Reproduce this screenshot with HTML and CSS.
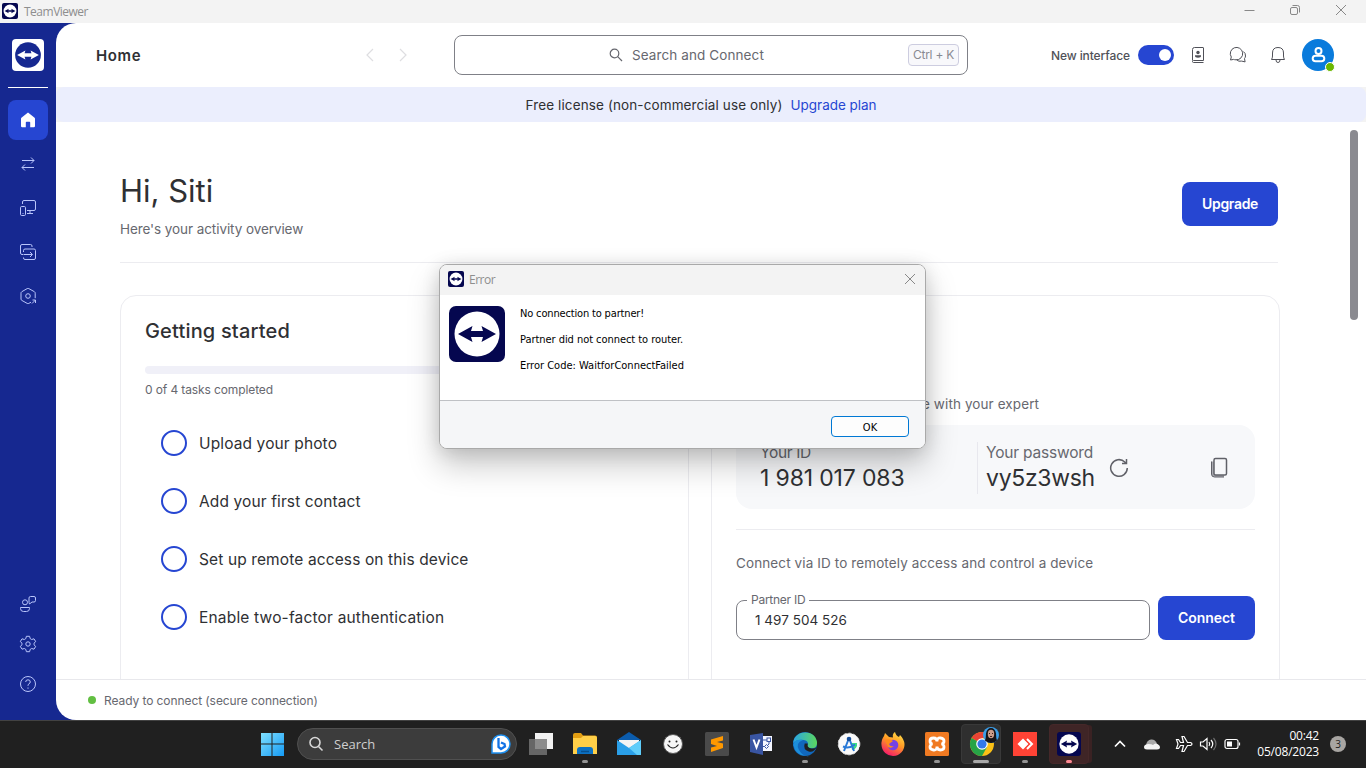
FILE: index.html
```html
<!DOCTYPE html>
<html lang="en">
<head>
<meta charset="utf-8">
<title>TeamViewer</title>
<link rel="stylesheet" href="styles.css">
</head>
<body>
<svg class="defs" width="0" height="0" aria-hidden="true">
  <symbol id="logo" viewBox="0 0 56 56">
    <rect class="logo-bg" width="56" height="56" rx="7"/>
    <circle class="logo-disc" cx="28" cy="28" r="22.500"/>
    <path class="logo-bg" d="M9 28l14.500-8-1.500 5h12l-1.500-5L47 28l-14.500 8 1.500-5H22l1.500 5z"/>
  </symbol>
</svg>

<header class="titlebar">
  <svg class="logo navy" width="16" height="16"><use href="#logo"/></svg>
  <span class="title-text">TeamViewer</span>
  <div class="win-buttons">
    <svg width="12" height="12" viewBox="0 0 12 12"><path d="M1.500 6.500h10"/></svg>
    <svg width="12" height="12" viewBox="0 0 12 12"><rect x="1.500" y="3.500" width="7" height="7" rx="1.500"/><path d="M3.500 1.500h5a2 2 0 0 1 2 2v5"/></svg>
    <svg width="12" height="12" viewBox="0 0 12 12"><path d="M1 1l10 10M11 1L1 11"/></svg>
  </div>
</header>

<div class="app">
  <nav class="sidebar">
    <svg class="logo inverse" width="32" height="32"><use href="#logo"/></svg>
    <div class="side-rule"></div>
    <a class="side-item active"><svg width="16" height="16" viewBox="0 0 16 16"><path class="fill" d="M8 .5L1.400 5.800Q1 6.200 1 6.800V14q0 1.200 1.200 1.200H5.800V10.500q0-.7.700-.7h3q.7 0 .7.700v4.700h3.600Q15 15.200 15 14V6.800q0-.6-.4-1z"/></svg></a>
    <a class="side-item"><svg width="16" height="16" viewBox="0 0 16 16"><path d="M2 4.500h12M11 1.500l3 3-3 3M14 11.500H2M5 8.500l-3 3 3 3"/></svg></a>
    <a class="side-item"><svg width="18" height="18" viewBox="0 0 18 18"><path d="M3.500 5V3q0-1.500 1.500-1.500h10q1.500 0 1.500 1.500v7q0 1.500-1.500 1.500H8M11 11.500v3M8 14.500h6"/><rect x="1.500" y="7.500" width="5" height="9" rx="1.200"/><path d="M3.500 14.500h1"/></svg></a>
    <a class="side-item"><svg width="18" height="18" viewBox="0 0 18 18"><path d="M4 11.500H3q-1.500 0-1.500-1.500V3q0-1.500 1.500-1.500h8.500Q13 1.500 13 3v1"/><path d="M4.500 9V7.500Q4.500 6 6 6h9q1.500 0 1.500 1.500V15q0 1.500-1.500 1.500H6q-1.500 0-1.500-1.500v-.5M4.500 11.500H13M11 9l2.500 2.500L11 14"/></svg></a>
    <a class="side-item"><svg width="18" height="18" viewBox="0 0 18 18"><path d="M12 15.200l-2.200 1.200q-.8.400-1.600 0L2.800 13.400Q2 13 2 12V6.200q0-1 .8-1.500L8.200 1.600q.8-.4 1.600 0l5.600 3.100q.8.500.8 1.500v5"/><circle cx="9" cy="9" r="2.300"/><path d="M13 16.500l3.500-3.500M13.500 13h3v3"/></svg></a>
    <div class="side-bottom">
      <a class="side-item"><svg width="18" height="18" viewBox="0 0 18 18"><circle cx="6" cy="7.300" r="2.500"/><path d="M1.500 12.500h9v1q0 3-3 3h-3q-3 0-3-3zM10 7.500V3q0-1.500 1.500-1.500H15q1.500 0 1.500 1.500v2.500Q16.500 7 15 7h-2l-2.500 2z"/></svg></a>
      <a class="side-item"><svg width="18" height="18" viewBox="0 0 18 18"><circle cx="9" cy="9" r="2.200"/><path d="M7.400 1.300h3.200l.6 2.300 1.500.9 2.300-.7 1.700 2.800L15 8.200v1.600l1.700 1.600-1.700 2.800-2.300-.7-1.500.9-.6 2.300H7.400l-.6-2.300-1.500-.9-2.300.7-1.700-2.800L3 9.800V8.200L1.300 6.600 3 3.800l2.300.7 1.500-.9z" stroke-linejoin="round"/></svg></a>
      <a class="side-item"><svg width="18" height="18" viewBox="0 0 18 18"><circle cx="9" cy="9" r="7.500"/><path d="M6.700 7Q6.700 4.800 9 4.800T11.300 7Q11.300 8 10 8.800T9 10.800M9 12.500v1.200"/></svg></a>
    </div>
  </nav>

  <main class="main">
    <div class="topbar">
      <h1 class="page-name">Home</h1>
      <div class="history">
        <svg width="14" height="14" viewBox="0 0 14 14"><path d="M10 1L4 7l6 6"/></svg>
        <svg width="14" height="14" viewBox="0 0 14 14"><path d="M4 1l6 6-6 6"/></svg>
      </div>
      <div class="searchbox">
        <svg width="14" height="14" viewBox="0 0 14 14"><circle cx="5.500" cy="5.500" r="4.300"/><path d="M8.700 8.700l4.300 4.300"/></svg>
        <span class="search-label">Search and Connect</span>
        <kbd class="shortcut">Ctrl + K</kbd>
      </div>
      <div class="tools">
        <span class="new-ui">New interface</span>
        <span class="switch"><i></i></span>
        <svg class="tool" width="20" height="20" viewBox="0 0 20 20"><path d="M4.500 15.500v-11Q4.500 2.500 6.500 2.500H15q.5 0 .5.500v12.500H5.500q-1 0-1 1t1 1h10"/><circle class="ink" cx="10" cy="7.500" r="1.700"/><path class="ink" d="M7 10.300h6v.7q0 1.700-3 1.700T7 11z"/></svg>
        <svg class="tool" width="20" height="20" viewBox="0 0 20 20"><path d="M2.500 15l.8-3A6.200 6.200 0 1 1 8 14.800q-1.500 0-2.500-.4zM15.300 6.500q2.400 1.500 2.200 4.500-.2 1.800-1 2.600l.6 3.300-3.400-.8q-3 .8-5-1.200"/></svg>
        <svg class="tool" width="20" height="20" viewBox="0 0 20 20"><path d="M3.500 14.500Q4.500 13 4.500 11V8q0-5.500 5.500-5.500T15.500 8v3q0 2 1 3.500zM8 15q0 2.500 2 2.500t2-2.500"/></svg>
        <span class="avatar"><svg width="18" height="18" viewBox="0 0 18 18"><circle cx="9.500" cy="5" r="3"/><rect x="3.700" y="9.700" width="11.600" height="5.600" rx="2.800"/></svg><b></b></span>
      </div>
    </div>
    <div class="banner-wrap"><div class="banner"><span class="lic">Free license (non-commercial use only)</span><a class="plan">Upgrade plan</a></div></div>

    <div class="content">
      <section class="hero">
        <div>
          <h2 class="greeting">Hi, Siti</h2>
          <p class="overview">Here's your activity overview</p>
        </div>
        <button class="btn upgrade">Upgrade</button>
      </section>
      <div class="cards">
        <section class="card start-card">
          <h3 class="card-title">Getting started</h3>
          <div class="progress"></div>
          <p class="progress-text">0 of 4 tasks completed</p>
          <ul class="tasks">
            <li><i></i><span>Upload your photo</span></li>
            <li><i></i><span>Add your first contact</span></li>
            <li><i></i><span>Set up remote access on this device</span></li>
            <li><i></i><span class="two-factor">Enable two-factor authentication</span></li>
          </ul>
        </section>
        <section class="card remote-card">
          <p class="share">e with your expert</p>
          <div class="credentials">
            <div class="cred id"><span class="cred-label l1">Your ID</span><span class="cred-value v1">1 981 017 083</span></div>
            <div class="cred pw"><span class="cred-label l2">Your password</span><span class="cred-value v2">vy5z3wsh</span></div>
            <svg class="refresh" width="20" height="20" viewBox="0 0 20 20"><path d="M18.300 10a8.300 8.300 0 1 1-2.500-6l1.200 1M17.500 1v4.500H13"/></svg>
            <svg class="copy" width="18" height="22" viewBox="0 0 18 22"><path class="copy-fill" d="M1.500 4.500H4V18h10v2H4.500q-3 0-3-3z"/><path d="M1.500 4.500V17q0 3 3 3H14" stroke-width="1"/><rect x="4" y="1.500" width="12.500" height="16.500" rx="1.500"/></svg>
          </div>
          <div class="rule"></div>
          <p class="via">Connect via ID to remotely access and control a device</p>
          <div class="connect-row">
            <fieldset class="field"><legend>Partner ID</legend><span class="pval">1 497 504 526</span></fieldset>
            <button class="btn connect">Connect</button>
          </div>
        </section>
      </div>
      <div class="scroll-thumb"></div>
    </div>
    <footer class="status"><i></i><span>Ready to connect (secure connection)</span></footer>
  </main>
</div>

<div class="dialog" role="dialog">
  <div class="dialog-title">
    <svg class="logo navy" width="16" height="16"><use href="#logo"/></svg>
    <span class="err">Error</span>
    <svg class="close" width="12" height="12" viewBox="0 0 12 12"><path d="M1 1l10 10M11 1L1 11"/></svg>
  </div>
  <div class="dialog-body">
    <svg class="logo navy" width="56" height="56"><use href="#logo"/></svg>
    <div class="messages">
      <p class="m1">No connection to partner!</p>
      <p class="m2">Partner did not connect to router.</p>
      <p class="m3">Error Code: WaitforConnectFailed</p>
    </div>
  </div>
  <div class="dialog-foot"><button class="ok">OK</button></div>
</div>

<div class="taskbar">
  <div class="task start"><svg width="24" height="24" viewBox="0 0 24 24"><defs><linearGradient id="win" x1="0" y1="0" x2="1" y2="1"><stop offset="0" stop-color="#7fe0ff"/><stop offset="1" stop-color="#159bf5"/></linearGradient></defs><path fill="url(#win)" d="M1 1h10.500v10.500H1zM12.500 1H24v10.500H12.500zM1 12.500h10.500V24H1zM12.500 12.500H24V24H12.500z"/></svg></div>
  <div class="task-search">
    <svg width="16" height="16" viewBox="0 0 16 16"><circle cx="7" cy="6.500" r="5"/><path d="M10.500 10.500l4 4"/></svg>
    <span class="ts">Search</span>
    <svg class="bing" width="22" height="22" viewBox="0 0 22 22"><path d="M2 20V11a9 9 0 1 1 9 9z" fill="#fff" stroke="#1c8ff0" stroke-width="1.500"/><path d="M8.500 5v9l2.500 2 4-2.500-.5-2.500-3.500-1.500" fill="none" stroke="#1273e6" stroke-width="2.300"/></svg>
  </div>
  <div class="task"><svg width="26" height="24" viewBox="0 0 26 24"><rect x="7" y="1" width="18" height="16" fill="#f2f2f2"/><rect x="1" y="7" width="18" height="16" fill="#666"/><rect x="7" y="7" width="12" height="10" fill="#8c8c8c"/></svg></div>
  <div class="task run"><svg width="24" height="24" viewBox="0 0 24 24"><path d="M0 3q0-2 2-2h6l2 2.500h12q2 0 2 2V8H0z" fill="#e29e12"/><path d="M0 6h8l2-2h12q2 0 2 2v16H0z" fill="#ffcf48"/><path d="M4 22v-4q0-3 3-3h10q3 0 3 3v4z" fill="#0c71c3"/><path d="M8 19.500h8" stroke="#074f8d" stroke-width="1.500"/></svg></div>
  <div class="task"><svg width="24" height="24" viewBox="0 0 24 24"><path d="M0 8l12-8 12 8z" fill="#0b5cad"/><path d="M2 8h20v8H2z" fill="#f4f4f4"/><path d="M0 8l12 8 12-8v15H0z" fill="#2a9fe8"/><path d="M12 16L24 8v15h-4z" fill="#5fcdfa"/></svg></div>
  <div class="task"><svg width="22" height="22" viewBox="0 0 22 22"><circle cx="11" cy="11" r="9.500" fill="#f6f6f6" stroke="#555"/><circle cx="7.500" cy="8.500" r="1" fill="#222"/><circle cx="14.500" cy="8.500" r="1" fill="#222"/><path d="M5.500 11.500q5.500 7 11 0" fill="none" stroke="#222" stroke-width="1.200"/></svg></div>
  <div class="task"><svg width="24" height="24" viewBox="0 0 24 24"><rect width="24" height="24" rx="1.500" fill="#4a4a4a"/><path d="M6 7.500L18 4v4.500L12 10l6 1.500V16L6 20v-4.500l6-1.500-6-2z" fill="#ff9800"/></svg></div>
  <div class="task"><svg width="24" height="24" viewBox="0 0 24 24"><rect x="11" y="4" width="12" height="15" fill="#f4f6ff"/><rect x="18" y="6" width="3.500" height="3.500" fill="none" stroke="#3955a3"/><path d="M14 8h4M20 10v2l-2.500 2.500H14" fill="none" stroke="#3955a3"/><path d="M17.500 12.500l2 2-2 2-2-2z" fill="#f4f6ff" stroke="#3955a3"/><path d="M1 3l13-2v22L1 20z" fill="#3955a3"/><path d="M4.500 7.500l3 8 3-8" fill="none" stroke="#fff" stroke-width="2"/></svg></div>
  <div class="task run"><svg width="26" height="26" viewBox="0 0 26 26"><defs><linearGradient id="edge" x1="0" x2="1"><stop offset="0" stop-color="#2ba6e3"/><stop offset="1" stop-color="#5bd75d"/></linearGradient></defs><circle cx="13" cy="13" r="12" fill="#1168bd"/><path d="M1.300 11C3-1 23-2 25 11q.5 6-5.500 6.200-5 0-3.700-3.200 1-4-4-5Q5 8 1.300 12z" fill="url(#edge)"/><path d="M11 9Q3 12 7 19t10 6Q4 26 1.300 14q.7-6 9.700-5" fill="#1d8fdb"/><path d="M15.700 12.500q-1 4.500 4 5 3 .2 5-1.500-3 6-8 4.500-6-2-4-8z" fill="#202020"/></svg></div>
  <div class="task"><svg width="24" height="24" viewBox="0 0 24 24"><circle cx="12" cy="12" r="10.800" fill="#fafafa" stroke="#ddd" stroke-dasharray="3 2"/><path d="M14 11h6v3q-2 4-5 4z" fill="#3ddc84"/><path d="M12 6L7 19M12 6l5 13M6 14.500q6 2.500 12-2" fill="none" stroke="#2879d8" stroke-width="2"/><circle cx="12" cy="7" r="2.300" fill="#174f9b"/></svg></div>
  <div class="task"><svg width="26" height="26" viewBox="0 0 26 26"><defs><linearGradient id="fox" x1=".8" y1="0" x2=".3" y2="1"><stop offset="0" stop-color="#ffe14a"/><stop offset=".45" stop-color="#ff9a24"/><stop offset="1" stop-color="#f5156c"/></linearGradient></defs><path d="M4 5l1-3 4 4 4 .5Q12 3 15 1q1 4 4 5l1-2q4 4 4.500 9A11.500 11.500 0 0 1 1.500 14Q1 9 4 5z" fill="url(#fox)"/><circle cx="13" cy="14" r="5.300" fill="#7542e5"/><path d="M5 9q5-2 8 1l-4 3q1 3 5 2-3 3-6 1z" fill="#ff8a1c"/></svg></div>
  <div class="task run"><svg width="24" height="24" viewBox="0 0 24 24"><rect width="24" height="24" rx="1.500" fill="#f07a22"/><g fill="none" stroke="#fff" stroke-width="2.800"><path d="M12 9.500Q12 6 8.500 6T5 9q0 2.500 2.500 3Q5 12.500 5 15t3.500 3 3.500-3.500Q12 18 15.500 18t3.500-3q0-2.500-2.500-3 2.500-.5 2.500-3t-3.500-3T12 9.500z"/></g></svg></div>
  <div class="task current"><svg width="30" height="30" viewBox="0 0 30 30"><circle cx="13" cy="17" r="12" fill="#fbc116"/><path d="M13 17L2.600 11A12 12 0 0 1 23.400 11H13z" fill="#ea4335"/><path d="M2.600 11A12 12 0 0 0 13 29l5-9-5-3z" fill="#27a447"/><circle cx="13" cy="17" r="5.800" fill="#fff"/><circle cx="13" cy="17" r="4.600" fill="#3479e8"/><circle cx="22" cy="8" r="8" fill="#3b9ee8"/><path d="M16 13.500Q17 11 17 6.500 18 1 22 1t5 5.500q0 4.500 1 7-6 5-12 0z" fill="#161417"/><ellipse cx="22" cy="7" rx="3.200" ry="4.200" fill="#c99b88"/><path d="M20 6.500h1M23 6.500h1M21 9.500h2" stroke="#3b2222"/></svg></div>
  <div class="task run"><svg width="24" height="24" viewBox="0 0 24 24"><rect width="24" height="24" fill="#ff4335"/><path d="M4.500 12L10 6.500l5.500 5.500-5.500 5.500z" fill="#fff"/><path d="M13 7l5 5-5 5" fill="none" stroke="#ff4335" stroke-width="3"/><path d="M14 7l5 5-5 5" fill="none" stroke="#fff" stroke-width="2"/></svg></div>
  <div class="task alert"><svg class="logo navy" width="24" height="24"><use href="#logo"/></svg></div>
  <div class="tray">
    <svg class="line chev" width="14" height="14" viewBox="0 0 14 14"><path d="M2 9.500l5-5 5 5" stroke-width="1.700"/></svg>
    <svg class="cloud" width="18" height="14" viewBox="0 0 18 14"><path d="M3 8Q4 3 8 2.500t6 4L9 11z" fill="#aaa"/><path d="M4 12.500q-3 0-3-2.500t4-3q4 0 5 1 2-2.500 4.500-1T17 10q0 2.500-3 2.500z" fill="#f4f4f4"/></svg>
    <svg class="line plane" width="18" height="18" viewBox="0 0 18 18"><path d="M1.500 4.500h2l2 3h3l-1.500-6h2l3.500 6h3q1.500.5 1.500 1.500t-1.500 1.500h-3l-3.500 6H7l1.500-6h-3l-2 3h-2L3 9z"/></svg>
    <svg class="line vol" width="18" height="16" viewBox="0 0 18 16"><path d="M1.500 6v4h2.500l4 3.500v-11L4 6zM10 6q1.500 2 0 4M12 4q3.500 4 0 8"/><path d="M14.500 2q5 6 0 12" opacity=".35"/></svg>
    <svg class="line batt" width="17" height="12" viewBox="0 0 17 12"><rect x="1" y="1.500" width="13" height="9" rx="2"/><path d="M3 3.500h5v5H3z" fill="#fff" stroke="none"/><path d="M15.500 4.500v3"/></svg>
    <div class="clock"><span class="hm">00:42</span><span class="date">05/08/2023</span></div>
    <span class="count">3</span>
  </div>
</div>
</body>
</html>
```
FILE: styles.css
```css
* { box-sizing: border-box; }
html, body { margin: 0; width: 1366px; height: 768px; overflow: hidden; }
body { display: flex; flex-direction: column; background: #f3f3f3; color: #2f3033; font-family: Inter, "Noto Sans", sans-serif; position: relative; }
h1, h2, h3, p, ul { margin: 0; padding: 0; font-weight: 400; white-space: nowrap; }
svg { display: block; flex: none; fill: none; }
span { white-space: nowrap; }
.defs { position: absolute; }
.navy { --bg: #05074f; --disc: #fff; }
.inverse { --bg: #fff; --disc: #162890; }
.logo-bg { fill: var(--bg); }
.logo-disc { fill: var(--disc); }

/* Window title bar */
.titlebar { height: 23px; flex: none; display: flex; align-items: center; padding: 0 19px 1px 2px; background: #f3f3f3; font: 12px "Open Sans", sans-serif; letter-spacing: -.5px; color: #8e8e8e; }
.titlebar .logo { margin-right: 6px; }
.win-buttons { margin-left: auto; display: flex; gap: 34px; padding-bottom: 2px; }
.win-buttons svg, .close { stroke: #888; stroke-width: 1; }

/* Sidebar */
.app { height: 697px; flex: none; display: flex; background: #162890; }
.sidebar { width: 56px; flex: none; display: flex; flex-direction: column; align-items: center; padding: 16px 8px; }
.side-rule { width: 40px; height: 1px; background: #fff; margin: 16px 0 12px; flex: none; }
.side-item { width: 40px; height: 40px; margin-bottom: 4px; border-radius: 8px; display: flex; align-items: center; justify-content: center; flex: none; }
.side-item svg { stroke: #b9c5fb; stroke-width: 1; }
.side-item.active { background: #2646d2; }
.side-item .fill { fill: #fff; stroke: none; }
.side-bottom { margin-top: auto; }
.side-bottom .side-item { margin: 0; }

/* Top bar */
.main { flex: 1; min-width: 0; background: #fff; border-radius: 20px 0 0 20px; display: flex; flex-direction: column; overflow: hidden; }
.topbar { height: 64px; flex: none; display: flex; align-items: center; padding: 0 32px 0 40px; }
.page-name { width: 267px; font-size: 15px; font-weight: 600; letter-spacing: .65px; }
.history { display: flex; gap: 19px; }
.history svg { stroke: #dedee1; stroke-width: 1.200; }
.searchbox { margin-left: 44px; width: 514px; height: 40px; border: 1px solid #7f8087; border-radius: 8px; display: flex; align-items: center; padding: 0 8px 0 154px; color: #67686f; }
.searchbox svg { stroke: #67686f; stroke-width: 1.200; margin-right: 9px; }
.search-label { font-size: 13.500px; letter-spacing: .1px; padding-bottom: 1px; }
.shortcut { margin-left: auto; width: 51px; height: 22px; border: 1px solid #cdcde0; border-radius: 4px; background: #f8f8fb; display: flex; align-items: center; justify-content: center; font: 12px Inter, sans-serif; letter-spacing: -.26px; color: #898a92; padding-bottom: 1px; }
.tools { margin-left: auto; display: flex; align-items: center; }
.new-ui { font-size: 12px; font-weight: 500; letter-spacing: -.1px; color: #505158; }
.switch { width: 36px; height: 20px; border-radius: 10px; background: #2646d2; margin: 0 14px 0 8px; display: flex; align-items: center; justify-content: flex-end; padding-right: 3px; }
.switch i { width: 12px; height: 12px; border-radius: 50%; background: #fff; }
.tool { stroke: #505158; stroke-width: 1; margin-right: 20px; }
.tool .ink { fill: #505158; stroke: none; }
.avatar { width: 32px; height: 32px; border-radius: 50%; background: #0a7bdc; display: flex; align-items: center; justify-content: center; position: relative; margin-left: -6px; }
.avatar svg { stroke: #fff; stroke-width: 2; }
.avatar b { position: absolute; right: -1px; bottom: -1px; width: 10px; height: 10px; border-radius: 50%; background: #6bb700; border: 1px solid #fff; }
.banner-wrap { flex: none; background: #f3f3f3; }
.banner { height: 35px; border-radius: 8px; background: #ebeefd; display: flex; align-items: center; justify-content: center; gap: 8px; font-size: 13.500px; padding: 1px 20px 0 0; }
.lic { letter-spacing: .12px; }
.plan { color: #2646d2; letter-spacing: -.03px; }

/* Content */
.content { flex: 1; min-height: 0; overflow: hidden; padding: 0 86px 0 64px; position: relative; }
.hero { height: 141px; margin-right: 2px; border-bottom: 1px solid #ececf0; display: flex; justify-content: space-between; padding-top: 49px; }
.greeting { font-size: 31px; line-height: 40px; }
.overview { font-size: 13.500px; line-height: 20px; letter-spacing: -.08px; margin-top: 8px; color: #67686f; }
.btn { border: 0; border-radius: 8px; background: #2646d2; color: #fff; font: 600 14px Inter, sans-serif; height: 44px; padding: 0 0 1px; display: flex; align-items: center; justify-content: center; letter-spacing: -.05px; }
.upgrade { width: 96px; margin-top: 11px; letter-spacing: -.33px; }
.cards { display: flex; gap: 22px; margin-top: 32px; }
.card { width: 569px; height: 450px; border: 1px solid #ececf0; border-radius: 16px; padding: 24px; }
.card-title { font-size: 20px; line-height: 24px; font-weight: 500; letter-spacing: .17px; margin-top: -1px; }
.progress { height: 8px; margin-top: 23px; background: #f0f0f8; border-radius: 4px; }
.progress-text { font-size: 12px; line-height: 16px; letter-spacing: -.11px; margin-top: 8px; color: #67686f; }
.tasks { list-style: none; padding: 16px; }
.tasks li { display: flex; align-items: center; height: 58px; gap: 12px; font-size: 15.500px; letter-spacing: .12px; }
.tasks i { width: 26px; height: 26px; border: 2px solid #2646d2; border-radius: 50%; }
.two-factor { letter-spacing: .18px; }
.share { margin-top: 74px; padding-left: 186px; font-size: 13.500px; line-height: 20px; letter-spacing: .1px; color: #67686f; }
.credentials { margin-top: 11px; height: 84px; border-radius: 16px; background: #f7f8fa; display: flex; align-items: center; padding: 1px 27px 0 24px; }
.cred { display: flex; flex-direction: column; height: 52px; }
.cred.id { width: 218px; border-right: 1px solid #e8e8ee; }
.cred.pw { padding-left: 8px; width: 117px; }
.cred-label { font-size: 15.500px; line-height: 21px; color: #67686f; }
.cred-value { font-size: 23px; line-height: 31px; }
.l1 { letter-spacing: -.34px; }
.l2 { letter-spacing: -.19px; }
.v1 { letter-spacing: -.15px; }
.v2 { letter-spacing: -.3px; }
.refresh { stroke: #606168; stroke-width: 1.500; margin: 1px 0 0 14px; }
.copy { stroke: #606168; stroke-width: 1.500; margin: 1px 0 0 auto; }
.copy-fill { fill: #a9aab0; stroke: none; }
.rule { height: 1px; background: #ececf0; margin-top: 20px; }
.via { margin-top: 23px; font-size: 13.500px; line-height: 20px; letter-spacing: .11px; color: #67686f; }
.connect-row { display: flex; align-items: flex-end; gap: 8px; margin-top: 19px; }
.field { margin: 0; width: 414px; height: 48px; border: 1px solid #7f8087; border-radius: 8px; padding: 3px 18px 0; min-width: 0; font-size: 13.500px; letter-spacing: .03px; }
.field legend { margin-left: -8px; padding: 0 4px; font-size: 12px; line-height: 15px; letter-spacing: -.25px; color: #67686f; height: 17px; }
.connect { width: 97px; }
.scroll-thumb { position: absolute; right: 8px; top: 8px; width: 8px; height: 190px; border-radius: 4px; background: #8a8a90; }
.status { height: 41px; flex: none; border-top: 1px solid #e8e8ec; display: flex; align-items: center; padding-left: 32px; font-size: 12px; letter-spacing: -.08px; color: #67686f; }
.status i { width: 8px; height: 8px; border-radius: 50%; background: #62bf42; margin-right: 8px; }

/* Error dialog */
.dialog { position: absolute; left: 439px; top: 264px; width: 487px; height: 185px; border: 1px solid #a9a9a9; border-radius: 8px; background: #fff; overflow: hidden; box-shadow: 0 16px 32px rgba(0,0,0,.22), 0 2px 18px rgba(0,0,0,.12); }
.dialog-title { height: 30px; background: #f3f3f3; display: flex; align-items: center; padding: 0 9px 0 8px; font: 12px "Open Sans", sans-serif; color: #8e8e8e; }
.dialog-title .logo { margin: 0 5px 2px 0; }
.err { letter-spacing: -.5px; padding-bottom: 1px; }
.close { margin-left: auto; margin-bottom: 2px; }
.dialog-body { height: 105px; padding: 11px 9px; display: flex; gap: 15px; }
.messages { font: 11px/13px "DejaVu Sans Condensed", "DejaVu Sans", sans-serif; color: #000; padding-top: 1px; }
.messages p { margin-bottom: 13px; }
.m1 { letter-spacing: -.16px; }
.m2 { letter-spacing: -.05px; }
.dialog-foot { height: 48px; border-top: 1px solid #bfc1c5; background: #f5f6f8; padding: 15px 16px 0 0; }
.ok { display: block; margin-left: auto; width: 78px; height: 21px; border: 1px solid #0078d4; border-radius: 4px; background: #fdfdfd; font: 11px "DejaVu Sans Condensed", sans-serif; color: #000; padding: 1px 0 0; }

/* Taskbar */
.taskbar { height: 48px; flex: none; background: #202020; border-top: 1px solid #424242; display: flex; align-items: center; padding: 0 0 2px 250px; color: #fff; font-family: "Open Sans", sans-serif; }
.task { width: 44px; height: 46px; display: flex; align-items: center; justify-content: center; position: relative; flex: none; }
.task.run::after, .task.current::after, .task.alert::after { content: ""; position: absolute; bottom: 4px; left: 19px; width: 6px; height: 3px; border-radius: 2px; background: #949494; }
.task.current::before, .task.alert::before { content: ""; position: absolute; inset: 3px 2px; border-radius: 4px; background: #2f2f2f; border: 1px solid #393939; }
.task svg { position: relative; }
.task.current svg { left: 3px; top: -2px; }
.task.current::after { width: 16px; left: 14px; background: #a8a8a8; }
.task.alert::before { background: #3f2526; border-color: #452829; box-shadow: 4px 0 0 -1px #3a2223; }
.task.alert::after { background: #ff8a94; }
.task-search { width: 220px; height: 32px; margin: 0 2px 0 3px; border-radius: 16px; background: #3c3c3c; border: 1px solid #505050; display: flex; align-items: center; padding: 0 4px 0 10px; font-size: 13px; color: #cfcfcf; flex: none; }
.task-search svg { stroke: #d8d8d8; stroke-width: 1.600; margin-right: 10px; }
.task-search .bing { margin: 0 0 0 auto; stroke: none; }
.tray { display: flex; align-items: center; margin-left: 22px; }
.line { stroke: #fff; stroke-width: 1.200; }
.cloud { margin-left: 16px; }
.plane { margin-left: 14px; }
.vol { margin-left: 6px; }
.batt { margin-left: 7px; }
.clock { width: 78px; display: flex; flex-direction: column; align-items: flex-end; font-size: 12px; line-height: 16px; letter-spacing: -.2px; }
.count { width: 16px; height: 16px; border-radius: 50%; background: #a8a5a2; color: #202020; font-size: 10px; line-height: 16px; text-align: center; margin-left: 11px; }
```
